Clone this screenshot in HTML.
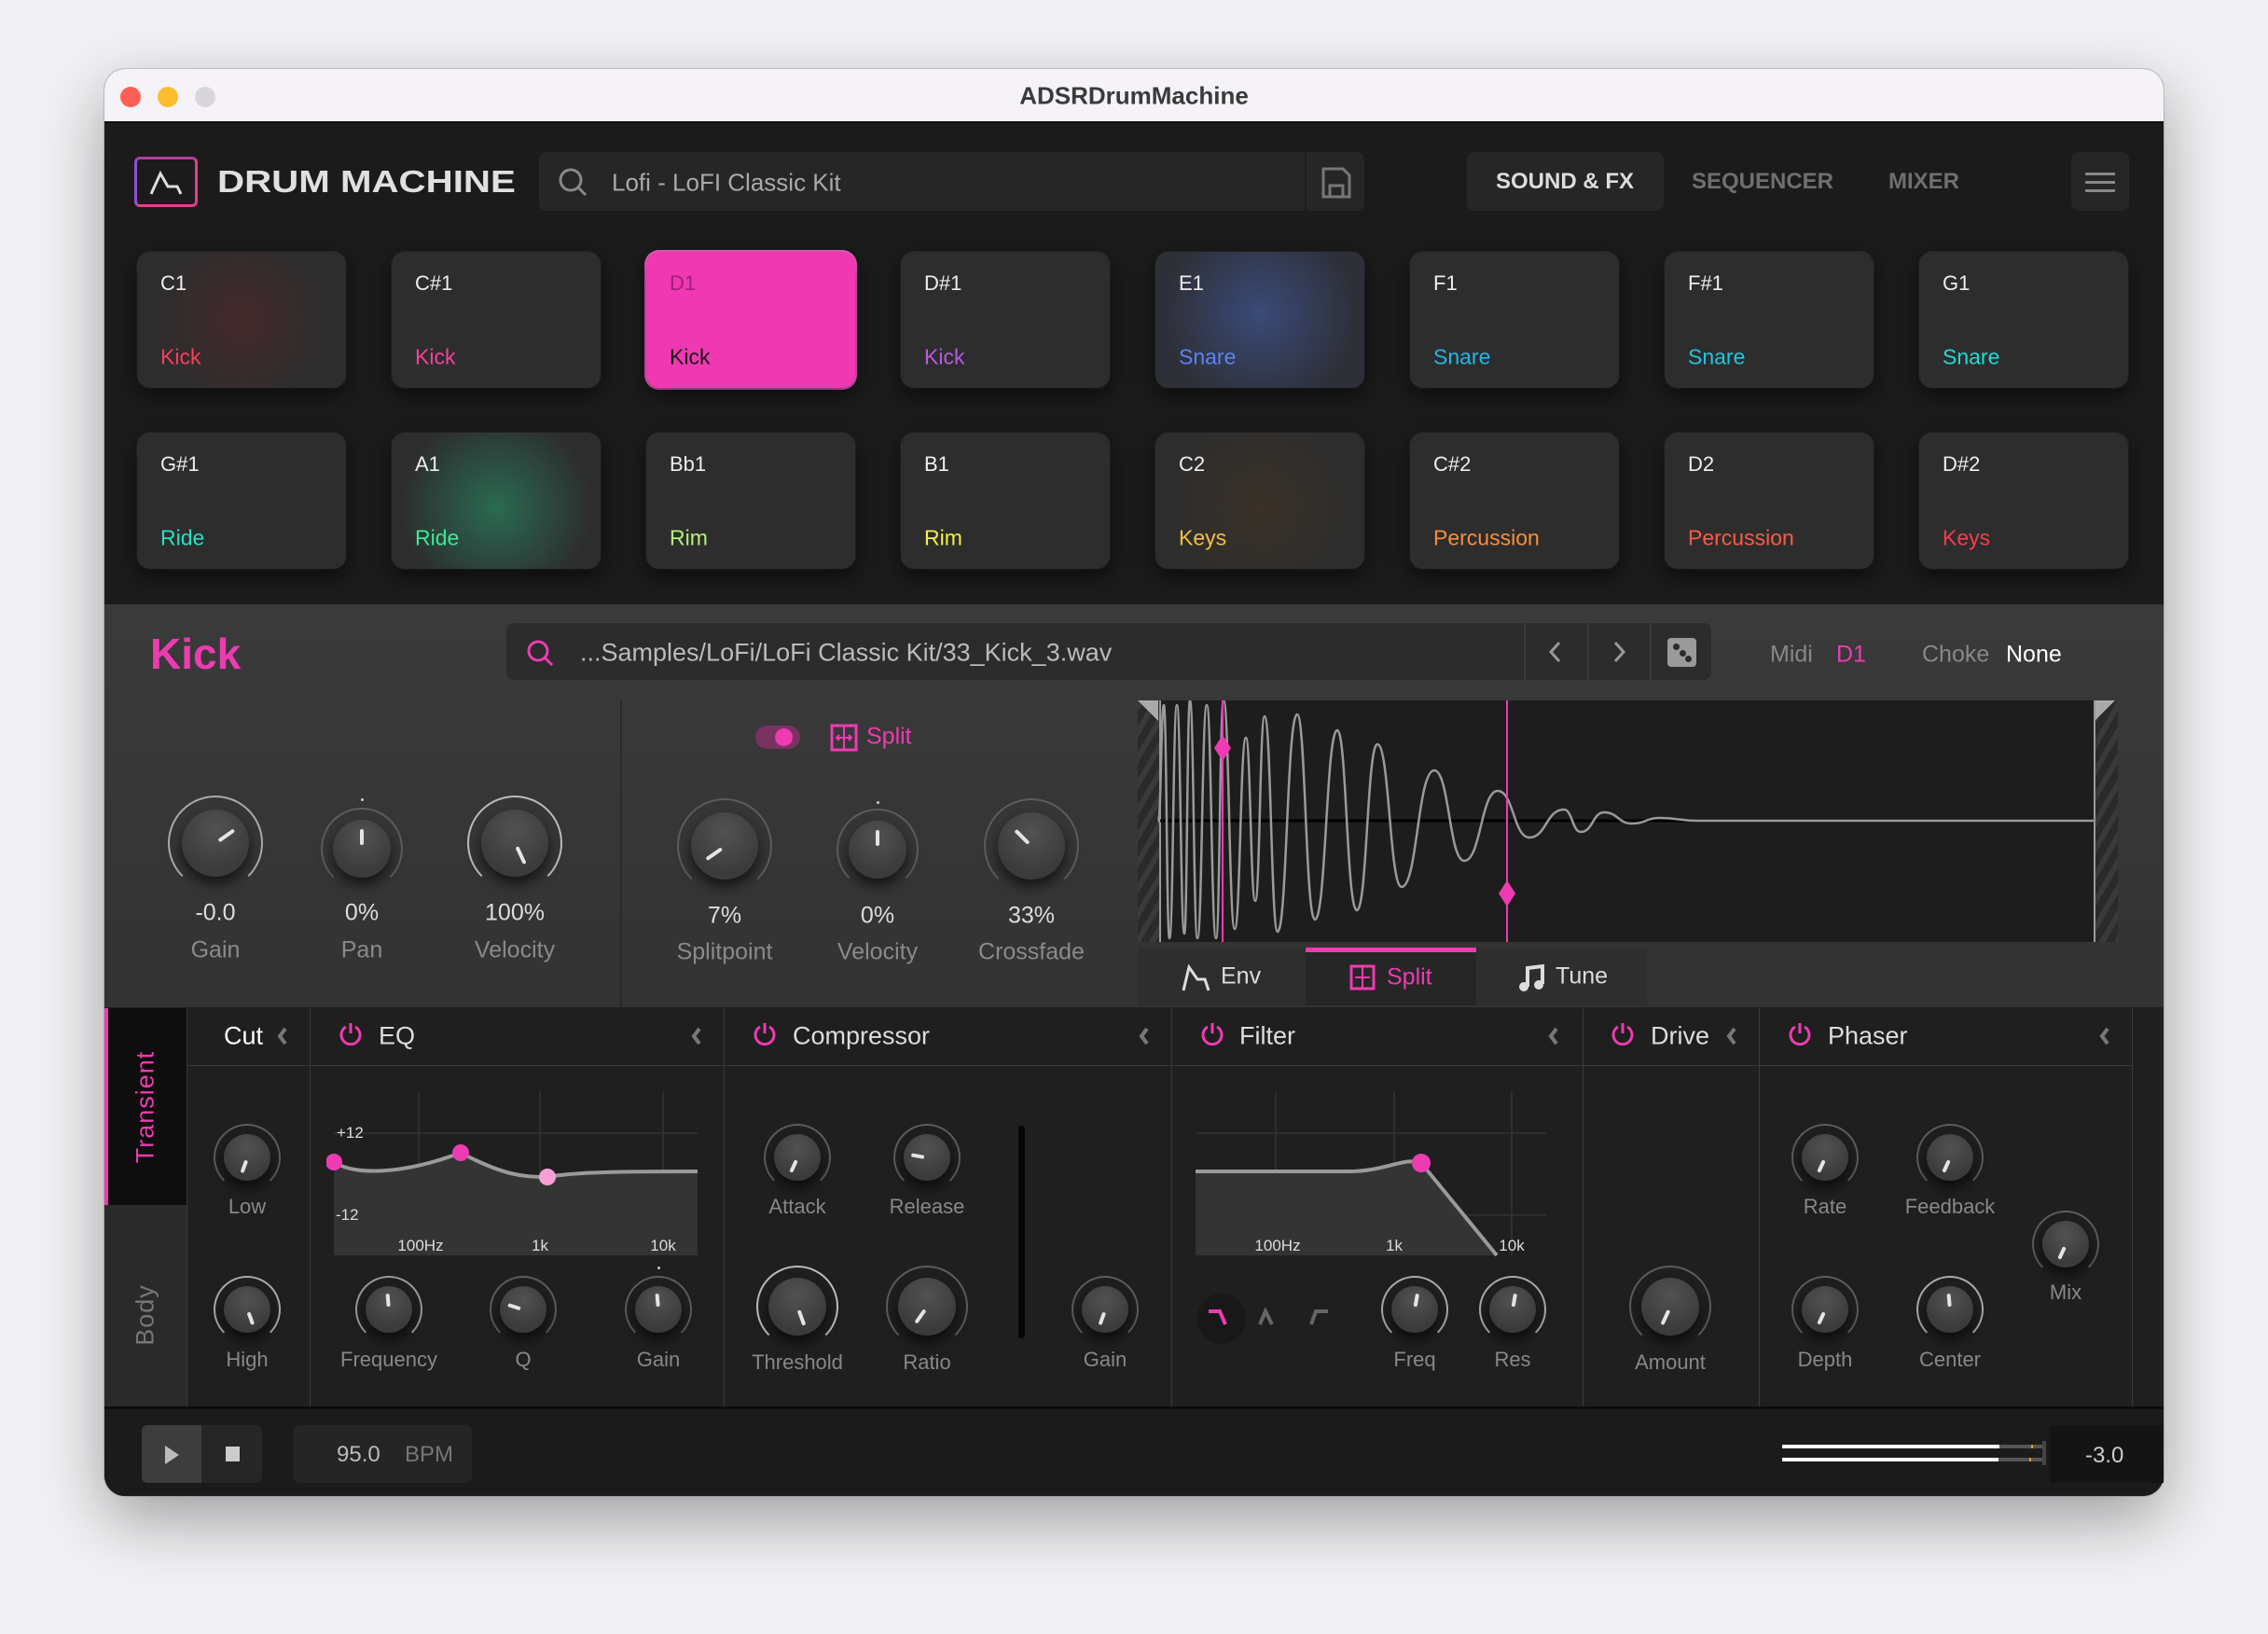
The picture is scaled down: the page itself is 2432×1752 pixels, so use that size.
<!DOCTYPE html>
<html><head><meta charset="utf-8"><style>
*{margin:0;padding:0;box-sizing:border-box}
body{width:2432px;height:1752px;background:#f1f1f3;position:relative;overflow:hidden;font-family:"Liberation Sans",sans-serif}
.a{position:absolute}
.c{position:absolute;transform:translate(-50%,-50%);white-space:nowrap}
.l{position:absolute;transform:translateY(-50%);white-space:nowrap}
.win{left:112px;top:74px;width:2208px;height:1530px;border-radius:22px;background:#1b1b1b;box-shadow:0 25px 70px rgba(0,0,0,.35),0 0 0 1px rgba(0,0,0,.15);overflow:hidden}
.pad{position:absolute;width:224px;height:146px;border-radius:14px;background:#2d2d2d;box-shadow:0 8px 22px rgba(0,0,0,.55),0 0 0 1px #262626}
.pad .n{position:absolute;left:25px;top:34px;transform:translateY(-50%);color:#eee;font-size:22px}
.pad .s{position:absolute;left:25px;top:113px;transform:translateY(-50%);font-size:23px}
.k{position:absolute;border-radius:50%;border:2px solid #5c5c5c;border-bottom-color:transparent}
.k i{position:absolute;inset:13%;border-radius:50%;background:radial-gradient(circle at 50% 30%,#525252,#3b3b3b 70%);box-shadow:0 8px 14px rgba(0,0,0,.6)}
.k b{position:absolute;inset:13%}
.k b:after{content:"";position:absolute;left:calc(50% - 2px);top:16%;width:4px;height:28%;background:#e4e4e4;border-radius:2px}
.val{color:#ddd;font-size:25px}
.lab{color:#8a8a8a;font-size:25px}
.fl{color:#888;font-size:22px}
.fh{color:#ddd;font-size:27px}
.vd{position:absolute;width:1px;background:#3a3a3a}
</style></head><body>
<div class="a win"></div>
<!-- title bar -->
<div class="a" style="left:112px;top:74px;width:2208px;height:58px;background:#f5f2f8;border-radius:22px 22px 0 0;border-bottom:2px solid #111"></div>
<div class="a" style="left:129px;top:93px;width:22px;height:22px;border-radius:50%;background:#fe5f57"></div>
<div class="a" style="left:169px;top:93px;width:22px;height:22px;border-radius:50%;background:#febc2e"></div>
<div class="a" style="left:209px;top:93px;width:22px;height:22px;border-radius:50%;background:#d8d6dc"></div>
<div class="c" style="left:1216px;top:103px;font-size:26px;font-weight:bold;color:#3a3a3a">ADSRDrumMachine</div>

<!-- header -->
<div class="a" style="left:144px;top:168px;width:68px;height:54px;border-radius:6px;border:3px solid #e0408a;border-left-color:#9050d0;border-top-color:#b040a0"></div>
<svg class="a" style="left:144px;top:168px" width="68" height="54"><path d="M18 40 L28 18 L36 32 L46 32 L50 40" stroke="#ddd" stroke-width="3" fill="none"/></svg>
<div class="a" style="left:233px;top:195px;font-size:33px;font-weight:bold;color:#e0e0e0;white-space:nowrap;transform-origin:left center;transform:translateY(-50%) scaleX(1.22)">DRUM MACHINE</div>
<div class="a" style="left:578px;top:163px;width:885px;height:63px;border-radius:8px;background:#262626"></div>
<div class="a" style="left:1399px;top:163px;width:2px;height:63px;background:#1b1b1b"></div>
<svg class="a" style="left:597px;top:178px" width="36" height="36"><circle cx="15" cy="15" r="11" stroke="#888" stroke-width="3" fill="none"/><path d="M23 23 L31 31" stroke="#888" stroke-width="3"/></svg>
<div class="l" style="left:656px;top:196px;font-size:26px;color:#aaa">Lofi - LoFI Classic Kit</div>
<svg class="a" style="left:1416px;top:178px" width="34" height="36"><path d="M3 3 H24 L31 10 V33 H3 Z M10 33 V21 H24 V33" stroke="#777" stroke-width="3" fill="none"/></svg>
<div class="a" style="left:1573px;top:163px;width:211px;height:63px;border-radius:8px;background:#262626"></div>
<div class="c" style="left:1678px;top:195px;font-size:24px;font-weight:bold;color:#ddd">SOUND &amp; FX</div>
<div class="c" style="left:1890px;top:195px;font-size:24px;font-weight:bold;color:#6f6f6f">SEQUENCER</div>
<div class="c" style="left:2063px;top:195px;font-size:24px;font-weight:bold;color:#6f6f6f">MIXER</div>
<div class="a" style="left:2221px;top:163px;width:62px;height:63px;border-radius:8px;background:#262626"></div>
<div class="a" style="left:2236px;top:185px;width:32px;height:3px;background:#888;box-shadow:0 9px 0 #888,0 18px 0 #888"></div>

<!-- pads row 1 -->
<div class="pad" style="left:147px;top:270px;background:radial-gradient(circle at 50% 50%,#45292b,#2d2d2d 70%)"><span class="n">C1</span><span class="s" style="color:#ff3d5e">Kick</span></div>
<div class="pad" style="left:420px;top:270px"><span class="n">C#1</span><span class="s" style="color:#f5429e">Kick</span></div>
<div class="pad" style="left:693px;top:270px;background:#ef38b2;box-shadow:0 8px 22px rgba(0,0,0,.55),0 0 0 2px #f060c0"><span class="n" style="color:#a0207a">D1</span><span class="s" style="color:#1a1a1a">Kick</span></div>
<div class="pad" style="left:966px;top:270px"><span class="n">D#1</span><span class="s" style="color:#b85ae6">Kick</span></div>
<div class="pad" style="left:1239px;top:270px;background:radial-gradient(circle at 50% 45%,#3a4a78,#2e3038 75%)"><span class="n">E1</span><span class="s" style="color:#5e82f2">Snare</span></div>
<div class="pad" style="left:1512px;top:270px"><span class="n">F1</span><span class="s" style="color:#22b6ea">Snare</span></div>
<div class="pad" style="left:1785px;top:270px"><span class="n">F#1</span><span class="s" style="color:#20c6e2">Snare</span></div>
<div class="pad" style="left:2058px;top:270px"><span class="n">G1</span><span class="s" style="color:#1fdad4">Snare</span></div>
<!-- pads row 2 -->
<div class="pad" style="left:147px;top:464px"><span class="n">G#1</span><span class="s" style="color:#22e2c6">Ride</span></div>
<div class="pad" style="left:420px;top:464px;background:radial-gradient(circle at 50% 55%,#2a6a52,#2d2d2d 75%)"><span class="n">A1</span><span class="s" style="color:#38ea98">Ride</span></div>
<div class="pad" style="left:693px;top:464px"><span class="n">Bb1</span><span class="s" style="color:#b4f27a">Rim</span></div>
<div class="pad" style="left:966px;top:464px"><span class="n">B1</span><span class="s" style="color:#f2f040">Rim</span></div>
<div class="pad" style="left:1239px;top:464px;background:radial-gradient(circle at 50% 55%,#3a3128,#2d2d2d 75%)"><span class="n">C2</span><span class="s" style="color:#f2c040">Keys</span></div>
<div class="pad" style="left:1512px;top:464px"><span class="n">C#2</span><span class="s" style="color:#ff8c3a">Percussion</span></div>
<div class="pad" style="left:1785px;top:464px"><span class="n">D2</span><span class="s" style="color:#ff5a42">Percussion</span></div>
<div class="pad" style="left:2058px;top:464px"><span class="n">D#2</span><span class="s" style="color:#ff3a4c">Keys</span></div>

<!-- sound section -->
<div class="a" style="left:112px;top:648px;width:2208px;height:432px;background:linear-gradient(180deg,#3a3a3a,#333)"></div>
<div class="l" style="left:161px;top:701px;font-size:46px;font-weight:bold;color:#ee3bb2">Kick</div>
<div class="a" style="left:543px;top:668px;width:1292px;height:61px;border-radius:8px;background:#2c2c2c"></div>
<div class="a" style="left:1634px;top:668px;width:2px;height:61px;background:#3a3a3a"></div>
<div class="a" style="left:1702px;top:668px;width:2px;height:61px;background:#3a3a3a"></div>
<div class="a" style="left:1769px;top:668px;width:2px;height:61px;background:#3a3a3a"></div>
<svg class="a" style="left:563px;top:684px" width="34" height="34"><circle cx="14" cy="14" r="10" stroke="#ee3bb2" stroke-width="3" fill="none"/><path d="M21 21 L29 29" stroke="#ee3bb2" stroke-width="3"/></svg>
<div class="l" style="left:622px;top:700px;font-size:27px;color:#bbb">...Samples/LoFi/LoFi Classic Kit/33_Kick_3.wav</div>
<svg class="a" style="left:1658px;top:686px" width="20" height="26"><path d="M14 3 L5 13 L14 23" stroke="#999" stroke-width="3" fill="none"/></svg>
<svg class="a" style="left:1726px;top:686px" width="20" height="26"><path d="M6 3 L15 13 L6 23" stroke="#999" stroke-width="3" fill="none"/></svg>
<div class="a" style="left:1788px;top:684px;width:31px;height:31px;border-radius:4px;background:#9a9a9a"></div>
<div class="a" style="left:1794px;top:690px;width:7px;height:7px;border-radius:50%;background:#2c2c2c;box-shadow:7px 7px 0 #2c2c2c,13px 13px 0 #2c2c2c"></div>
<div class="l" style="left:1898px;top:702px;font-size:25px;color:#888">Midi</div>
<div class="l" style="left:1969px;top:702px;font-size:25px;color:#ee3bb2">D1</div>
<div class="l" style="left:2061px;top:702px;font-size:25px;color:#888">Choke</div>
<div class="l" style="left:2151px;top:702px;font-size:25px;color:#fff">None</div>
<div class="a" style="left:665px;top:752px;width:2px;height:328px;background:#2a2a2a"></div>

<!-- main knobs -->
<div class="k" style="left:180px;top:853px;width:102px;height:102px;border-color:#aaa;border-bottom-color:transparent"><i></i><b style="transform:rotate(55deg)"></b></div>
<div class="a" style="left:387px;top:856px;width:3px;height:3px;background:#ccc;border-radius:50%"></div>
<div class="k" style="left:344px;top:866px;width:88px;height:88px"><i></i><b></b></div>
<div class="k" style="left:501px;top:853px;width:102px;height:102px;border-color:#bbb;border-bottom-color:transparent"><i></i><b style="transform:rotate(155deg)"></b></div>
<div class="c val" style="left:231px;top:979px">-0.0</div><div class="c lab" style="left:231px;top:1019px">Gain</div>
<div class="c val" style="left:388px;top:979px">0%</div><div class="c lab" style="left:388px;top:1019px">Pan</div>
<div class="c val" style="left:552px;top:979px">100%</div><div class="c lab" style="left:552px;top:1019px">Velocity</div>

<div class="a" style="left:810px;top:778px;width:48px;height:25px;border-radius:13px;background:#7a3262"></div>
<div class="a" style="left:831px;top:781px;width:19px;height:19px;border-radius:50%;background:#ee3bb2"></div>
<svg class="a" style="left:890px;top:776px" width="30" height="30"><rect x="2" y="2" width="26" height="26" stroke="#ee3bb2" stroke-width="3" fill="none"/><path d="M15 2 V28 M7 15 H23 M10 12 L7 15 L10 18 M20 12 L23 15 L20 18" stroke="#ee3bb2" stroke-width="2" fill="none"/></svg>
<div class="l" style="left:929px;top:790px;font-size:25px;color:#ee3bb2">Split</div>
<div class="k" style="left:726px;top:856px;width:102px;height:102px"><i></i><b style="transform:rotate(235deg)"></b></div>
<div class="a" style="left:940px;top:859px;width:3px;height:3px;background:#ccc;border-radius:50%"></div>
<div class="k" style="left:897px;top:867px;width:88px;height:88px"><i></i><b></b></div>
<div class="k" style="left:1055px;top:856px;width:102px;height:102px"><i></i><b style="transform:rotate(-45deg)"></b></div>
<div class="c val" style="left:777px;top:982px">7%</div><div class="c lab" style="left:777px;top:1021px">Splitpoint</div>
<div class="c val" style="left:941px;top:982px">0%</div><div class="c lab" style="left:941px;top:1021px">Velocity</div>
<div class="c val" style="left:1106px;top:982px">33%</div><div class="c lab" style="left:1106px;top:1021px">Crossfade</div>

<!-- waveform -->
<svg class="a" style="left:1220px;top:751px" width="1051" height="259">
<defs><pattern id="h" width="14" height="14" patternUnits="userSpaceOnUse" patternTransform="rotate(30)"><rect width="14" height="14" fill="#2a2a2a"/><rect width="6" height="14" fill="#3a3a3a"/></pattern></defs>
<rect x="0" y="0" width="1051" height="259" fill="url(#h)"/>
<rect x="24" y="0" width="1002" height="259" fill="#1d1d1d"/>
<path d="M0 0 H22 V22 Z" fill="#aaa"/><path d="M1026 0 H1048 L1026 22 Z" fill="#aaa"/>
<path d="M24 0 V259 M1026 0 V259" stroke="#999" stroke-width="2"/>
<path d="M24 129 H1026" stroke="#000" stroke-width="3"/>
<path d="M22 130 C25 130 25 5 28 5 C31 5 31 255 34 255 C38 255 38 5 42 5 C46 5 46 250 50 250 C53 250 53 0 56 0 C60 0 60 255 64 255 C69 255 69 5 74 5 C79 5 79 255 84 255 C88 255 88 0 92 0 C98 0 98 245 104 245 C110 245 110 40 116 40 C121 40 121 215 126 215 C131 215 131 17 136 17 C143 17 143 248 150 248 C160 248 160 15 171 15 C180 15 180 235 190 235 C202 235 202 32 214 32 C224 32 224 225 235 225 C246 225 246 47 257 47 C270 47 270 200 283 200 C300 200 300 75 318 75 C334 75 334 172 350 172 C368 172 368 97 386 97 C403 97 403 147 420 147 C438 147 438 117 457 117 C466 117 466 141 475 141 C488 141 488 120 500 120 C515 120 515 132 530 132 C545 132 545 126 560 126 C580 126 580 129 600 129 L1026 129" stroke="#9a9a9a" stroke-width="2.5" fill="none"/>
<path d="M91 0 V259 M396 0 V259" stroke="#ee3bb2" stroke-width="2"/>
<path d="M91 37 L100 51 L91 65 L82 51 Z M396 193 L405 207 L396 221 L387 207 Z" fill="#ee3bb2"/>
</svg>
<!-- wave tabs -->
<div class="a" style="left:1220px;top:1016px;width:180px;height:62px;background:#2e2e2e"></div>
<div class="a" style="left:1400px;top:1016px;width:183px;height:62px;background:#262626;border-top:5px solid #ee3bb2"></div>
<div class="a" style="left:1583px;top:1016px;width:183px;height:62px;background:#2e2e2e"></div>
<svg class="a" style="left:1266px;top:1034px" width="34" height="30"><path d="M3 28 L9 3 L18 16 H26 L30 28" stroke="#ddd" stroke-width="3" fill="none"/></svg>
<div class="l" style="left:1309px;top:1047px;font-size:25px;color:#ddd">Env</div>
<svg class="a" style="left:1447px;top:1034px" width="28" height="28"><rect x="2" y="2" width="24" height="24" stroke="#ee3bb2" stroke-width="3" fill="none"/><path d="M14 2 V26 M6 14 H22" stroke="#ee3bb2" stroke-width="2"/></svg>
<div class="l" style="left:1487px;top:1048px;font-size:25px;color:#ee3bb2">Split</div>
<svg class="a" style="left:1628px;top:1034px" width="30" height="30"><path d="M10 24 V4 L26 2 V21" stroke="#ddd" stroke-width="4" fill="none"/><circle cx="6" cy="24" r="5" fill="#ddd"/><circle cx="22" cy="22" r="5" fill="#ddd"/></svg>
<div class="l" style="left:1668px;top:1047px;font-size:25px;color:#ddd">Tune</div>

<!-- FX section -->
<div class="a" style="left:112px;top:1080px;width:2208px;height:428px;background:#1f1f1f"></div>
<div class="a" style="left:200px;top:1142px;width:2086px;height:1px;background:#3a3a3a"></div>
<div class="a" style="left:112px;top:1081px;width:88px;height:211px;background:#0e0e0e;border-left:4px solid #ee3bb2"></div>
<div class="a" style="left:112px;top:1292px;width:88px;height:216px;background:#2a2a2a"></div>
<div class="c" style="left:156px;top:1187px;transform:translate(-50%,-50%) rotate(-90deg);font-size:27px;color:#ee3bb2;letter-spacing:1px">Transient</div>
<div class="c" style="left:156px;top:1410px;transform:translate(-50%,-50%) rotate(-90deg);font-size:27px;color:#777;letter-spacing:1px">Body</div>
<div class="vd" style="left:200px;top:1081px;height:427px"></div>
<div class="vd" style="left:332px;top:1081px;height:427px"></div>
<div class="vd" style="left:776px;top:1081px;height:427px"></div>
<div class="vd" style="left:1256px;top:1081px;height:427px"></div>
<div class="vd" style="left:1697px;top:1081px;height:427px"></div>
<div class="vd" style="left:1886px;top:1081px;height:427px"></div>
<div class="vd" style="left:2286px;top:1081px;height:427px"></div>
<!-- fx headers -->
<div class="l fh" style="left:240px;top:1111px;color:#fff">Cut</div>
<svg class="a" width="0" height="0"><defs><g id="pw"><path d="M9 4 A10 10 0 1 0 19 4" stroke="#ee3bb2" stroke-width="3" fill="none"/><path d="M14 0 V11" stroke="#ee3bb2" stroke-width="3"/></g><path id="cv" d="M9 2 L3 10 L9 18" stroke="#777" stroke-width="4" fill="none"/></defs></svg>
<svg class="a" style="left:297px;top:1101px" width="14" height="20"><use href="#cv"/></svg>
<svg class="a" style="left:362px;top:1097px" width="28" height="28"><use href="#pw"/></svg>
<div class="l fh" style="left:406px;top:1111px">EQ</div>
<svg class="a" style="left:741px;top:1101px" width="14" height="20"><use href="#cv"/></svg>
<svg class="a" style="left:806px;top:1097px" width="28" height="28"><use href="#pw"/></svg>
<div class="l fh" style="left:850px;top:1111px">Compressor</div>
<svg class="a" style="left:1221px;top:1101px" width="14" height="20"><use href="#cv"/></svg>
<svg class="a" style="left:1286px;top:1097px" width="28" height="28"><use href="#pw"/></svg>
<div class="l fh" style="left:1329px;top:1111px">Filter</div>
<svg class="a" style="left:1660px;top:1101px" width="14" height="20"><use href="#cv"/></svg>
<svg class="a" style="left:1726px;top:1097px" width="28" height="28"><use href="#pw"/></svg>
<div class="l fh" style="left:1770px;top:1111px">Drive</div>
<svg class="a" style="left:1851px;top:1101px" width="14" height="20"><use href="#cv"/></svg>
<svg class="a" style="left:1916px;top:1097px" width="28" height="28"><use href="#pw"/></svg>
<div class="l fh" style="left:1960px;top:1111px">Phaser</div>
<svg class="a" style="left:2251px;top:1101px" width="14" height="20"><use href="#cv"/></svg>

<!-- Cut knobs -->
<div class="k" style="left:229px;top:1205px;width:72px;height:72px"><i></i><b style="transform:rotate(200deg)"></b></div>
<div class="c fl" style="left:265px;top:1294px">Low</div>
<div class="k" style="left:229px;top:1368px;width:72px;height:72px;border-color:#aaa;border-bottom-color:transparent"><i></i><b style="transform:rotate(160deg)"></b></div>
<div class="c fl" style="left:265px;top:1458px">High</div>

<!-- EQ graph -->
<svg class="a" style="left:350px;top:1160px" width="410" height="190">
<path d="M99 10 V186 M229 10 V186 M361 10 V186" stroke="#333" stroke-width="1.5"/>
<path d="M8 55 H398 M8 143 H398" stroke="#333" stroke-width="1.5"/>
<path d="M8 86 C30 100 80 100 144 76 C190 100 210 102 237 102 C270 96 330 96 398 96 L398 186 L8 186 Z" fill="#343434"/>
<path d="M8 86 C30 100 80 100 144 76 C190 100 210 102 237 102 C270 96 330 96 398 96" stroke="#9a9a9a" stroke-width="4" fill="none"/>
<circle cx="8" cy="86" r="9" fill="#ee3bb2"/><circle cx="144" cy="76" r="9" fill="#ee3bb2"/><circle cx="237" cy="102" r="9" fill="#f6a0d6"/>
</svg>
<div class="l" style="left:361px;top:1215px;font-size:17px;color:#ddd">+12</div>
<div class="l" style="left:360px;top:1303px;font-size:17px;color:#ddd">-12</div>
<div class="c" style="left:451px;top:1336px;font-size:17px;color:#ddd">100Hz</div>
<div class="c" style="left:579px;top:1336px;font-size:17px;color:#ddd">1k</div>
<div class="c" style="left:711px;top:1336px;font-size:17px;color:#ddd">10k</div>
<div class="k" style="left:381px;top:1368px;width:72px;height:72px;border-color:#999;border-bottom-color:transparent"><i></i><b style="transform:rotate(-5deg)"></b></div>
<div class="k" style="left:525px;top:1368px;width:72px;height:72px"><i></i><b style="transform:rotate(-72deg)"></b></div>
<div class="a" style="left:705px;top:1358px;width:3px;height:3px;background:#ccc;border-radius:50%"></div>
<div class="k" style="left:670px;top:1368px;width:72px;height:72px"><i></i><b style="transform:rotate(-5deg)"></b></div>
<div class="c fl" style="left:417px;top:1458px">Frequency</div>
<div class="c fl" style="left:561px;top:1458px">Q</div>
<div class="c fl" style="left:706px;top:1458px">Gain</div>

<!-- Compressor -->
<div class="k" style="left:819px;top:1205px;width:72px;height:72px"><i></i><b style="transform:rotate(205deg)"></b></div>
<div class="k" style="left:958px;top:1205px;width:72px;height:72px"><i></i><b style="transform:rotate(-80deg)"></b></div>
<div class="c fl" style="left:855px;top:1294px">Attack</div>
<div class="c fl" style="left:994px;top:1294px">Release</div>
<div class="k" style="left:811px;top:1357px;width:88px;height:88px;border-color:#bbb;border-bottom-color:transparent"><i></i><b style="transform:rotate(160deg)"></b></div>
<div class="k" style="left:950px;top:1357px;width:88px;height:88px"><i></i><b style="transform:rotate(215deg)"></b></div>
<div class="c fl" style="left:855px;top:1461px">Threshold</div>
<div class="c fl" style="left:994px;top:1461px">Ratio</div>
<div class="a" style="left:1092px;top:1207px;width:7px;height:228px;background:#050505;border-radius:4px"></div>
<div class="k" style="left:1149px;top:1368px;width:72px;height:72px"><i></i><b style="transform:rotate(200deg)"></b></div>
<div class="c fl" style="left:1185px;top:1458px">Gain</div>

<!-- Filter -->
<svg class="a" style="left:1276px;top:1160px" width="390" height="190">
<path d="M92 10 V186 M219 10 V186 M345 10 V186" stroke="#333" stroke-width="1.5"/>
<path d="M6 55 H382 M6 143 H382" stroke="#333" stroke-width="1.5"/>
<path d="M6 96 H170 C210 96 230 80 248 87 L329 186 L6 186 Z" fill="#343434"/>
<path d="M6 96 H170 C210 96 230 80 248 87 L329 186" stroke="#9a9a9a" stroke-width="4" fill="none"/>
<circle cx="248" cy="87" r="10" fill="#ee3bb2"/>
</svg>
<div class="c" style="left:1370px;top:1336px;font-size:17px;color:#ddd">100Hz</div>
<div class="c" style="left:1495px;top:1336px;font-size:17px;color:#ddd">1k</div>
<div class="c" style="left:1621px;top:1336px;font-size:17px;color:#ddd">10k</div>
<div class="a" style="left:1284px;top:1387px;width:52px;height:54px;border-radius:50%;background:#181818"></div>
<svg class="a" style="left:1294px;top:1400px" width="150" height="30"><path d="M2 6 H14 L20 20" stroke="#ee3bb2" stroke-width="4" fill="none"/><path d="M57 20 L63 6 L70 20" stroke="#666" stroke-width="4" fill="none"/><path d="M112 20 L117 6 H130" stroke="#666" stroke-width="4" fill="none"/></svg>
<div class="k" style="left:1481px;top:1368px;width:72px;height:72px;border-color:#aaa;border-bottom-color:transparent"><i></i><b style="transform:rotate(10deg)"></b></div>
<div class="k" style="left:1586px;top:1368px;width:72px;height:72px;border-color:#aaa;border-bottom-color:transparent"><i></i><b style="transform:rotate(10deg)"></b></div>
<div class="c fl" style="left:1517px;top:1458px">Freq</div>
<div class="c fl" style="left:1622px;top:1458px">Res</div>

<!-- Drive -->
<div class="k" style="left:1747px;top:1357px;width:88px;height:88px"><i></i><b style="transform:rotate(205deg)"></b></div>
<div class="c fl" style="left:1791px;top:1461px">Amount</div>

<!-- Phaser -->
<div class="k" style="left:1921px;top:1205px;width:72px;height:72px"><i></i><b style="transform:rotate(205deg)"></b></div>
<div class="k" style="left:2055px;top:1205px;width:72px;height:72px"><i></i><b style="transform:rotate(205deg)"></b></div>
<div class="c fl" style="left:1957px;top:1294px">Rate</div>
<div class="c fl" style="left:2091px;top:1294px">Feedback</div>
<div class="k" style="left:1921px;top:1368px;width:72px;height:72px"><i></i><b style="transform:rotate(205deg)"></b></div>
<div class="k" style="left:2055px;top:1368px;width:72px;height:72px;border-color:#aaa;border-bottom-color:transparent"><i></i><b style="transform:rotate(-5deg)"></b></div>
<div class="c fl" style="left:1957px;top:1458px">Depth</div>
<div class="c fl" style="left:2091px;top:1458px">Center</div>
<div class="k" style="left:2179px;top:1298px;width:72px;height:72px"><i></i><b style="transform:rotate(205deg)"></b></div>
<div class="c fl" style="left:2215px;top:1386px">Mix</div>

<!-- bottom bar -->
<div class="a" style="left:112px;top:1508px;width:2208px;height:96px;background:#1b1b1b;border-top:3px solid #0c0c0c;border-radius:0 0 22px 22px"></div>
<div class="a" style="left:152px;top:1528px;width:129px;height:62px;border-radius:6px;background:#262626"></div>
<div class="a" style="left:152px;top:1528px;width:64px;height:62px;border-radius:6px 0 0 6px;background:#3d3d3d"></div>
<svg class="a" style="left:174px;top:1548px" width="22" height="24"><path d="M3 2 L18 12 L3 22 Z" fill="#bbb"/></svg>
<div class="a" style="left:242px;top:1551px;width:15px;height:16px;background:#ccc"></div>
<div class="a" style="left:315px;top:1528px;width:191px;height:62px;border-radius:6px;background:#252525"></div>
<div class="l" style="left:361px;top:1560px;font-size:24px;color:#bbb">95.0</div>
<div class="l" style="left:434px;top:1560px;font-size:24px;color:#777">BPM</div>
<div class="a" style="left:1911px;top:1549px;width:283px;height:4px;background:#555"></div>
<div class="a" style="left:1911px;top:1549px;width:233px;height:4px;background:#fff"></div>
<div class="a" style="left:1911px;top:1563px;width:283px;height:4px;background:#555"></div>
<div class="a" style="left:1911px;top:1563px;width:232px;height:4px;background:#fff"></div>
<div class="a" style="left:2178px;top:1549px;width:2px;height:4px;background:#e0a020"></div>
<div class="a" style="left:2176px;top:1563px;width:2px;height:4px;background:#e0a020"></div>
<div class="a" style="left:2190px;top:1545px;width:4px;height:26px;background:#444"></div>
<div class="a" style="left:2198px;top:1528px;width:122px;height:62px;background:#141414"></div>
<div class="l" style="left:2236px;top:1561px;font-size:24px;color:#ccc">-3.0</div>
</body></html>
